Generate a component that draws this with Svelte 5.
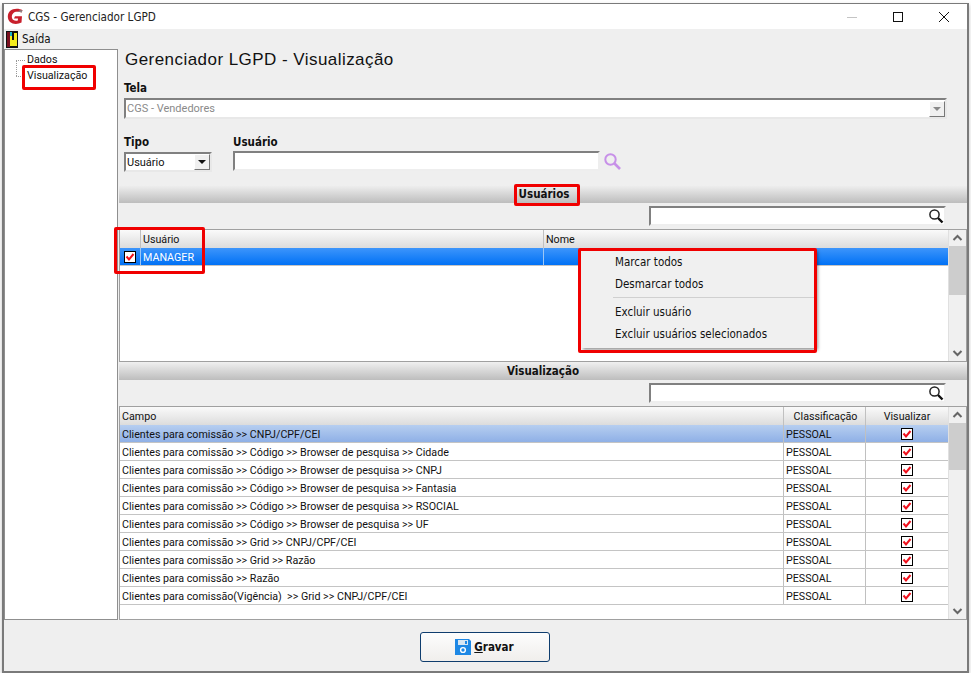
<script>
  const users = [{ name: 'MANAGER' }];
  const menu = ['Marcar todos', 'Desmarcar todos', null, 'Excluir usuário', 'Excluir usuários selecionados'];
  const fields = [
    'Clientes para comissão >> CNPJ/CPF/CEI',
    'Clientes para comissão >> Código >> Browser de pesquisa >> Cidade',
    'Clientes para comissão >> Código >> Browser de pesquisa >> CNPJ',
    'Clientes para comissão >> Código >> Browser de pesquisa >> Fantasia',
    'Clientes para comissão >> Código >> Browser de pesquisa >> RSOCIAL',
    'Clientes para comissão >> Código >> Browser de pesquisa >> UF',
    'Clientes para comissão >> Grid >> CNPJ/CPF/CEI',
    'Clientes para comissão >> Grid >> Razão',
    'Clientes para comissão >> Razão',
    'Clientes para comissão(Vigência)  >> Grid >> CNPJ/CPF/CEI'
  ];
</script>

{#snippet check()}
  <svg class="check" width="12" height="12" viewBox="0 0 12 12">
    <rect x="0.5" y="0.5" width="11" height="11" fill="#fff" stroke="#000" />
    <path d="M2.5 5.5 L5 8.5 L9.5 3" fill="none" stroke="#f0101c" stroke-width="2" />
  </svg>
{/snippet}

{#snippet lens()}
  <svg width="16" height="16" viewBox="0 0 16 16">
    <circle cx="6.5" cy="6.5" r="4.6" fill="none" stroke="#222" stroke-width="1.5" />
    <path d="M10 10 L14.5 14.5" stroke="#111" stroke-width="2.4" />
  </svg>
{/snippet}

{#snippet scrollbar(thumb)}
  <div class="scroll">
    <svg width="17" height="16" viewBox="0 0 17 16"><path d="M4.5 10 L8.5 6 L12.5 10" fill="none" stroke="#666" stroke-width="2" /></svg>
    <div class="thumb" style="height: {thumb}px"></div>
    <div class="track"></div>
    <svg width="17" height="16" viewBox="0 0 17 16"><path d="M4.5 6 L8.5 10 L12.5 6" fill="none" stroke="#666" stroke-width="2" /></svg>
  </div>
{/snippet}

<div class="window">
  <div class="titlebar">
    <svg class="logo" width="17" height="17" viewBox="0 0 17 17">
      <path d="M15.5 2.2 C12 0 6 0.2 3 3 C0 6 0.2 11 3 14 C6 16.6 11 16.4 14.5 14.5 L15 8.2 L8 8.2 L7 10.5 L11 10.6 L10.8 12.6 C8 13.2 5.6 12.4 5 10 C4.4 7 6 4.4 9 3.8 C11 3.4 13 3.8 14.6 4.6 Z" fill="#c8202c" />
      <path d="M15.5 2.2 L14.6 4.6 C13 3.8 11.5 3.4 10 3.5 C12 2.4 14 2 15.5 2.2 Z" fill="#8a8a8a" />
    </svg>
    <span class="title">CGS - Gerenciador LGPD</span>
    <div class="controls">
      <svg width="12" height="12" viewBox="0 0 12 12"><path d="M1 6.5 H11" stroke="#c4c4c4" /></svg>
      <svg width="12" height="12" viewBox="0 0 12 12"><rect x="1.5" y="1.5" width="9" height="9" fill="none" stroke="#111" /></svg>
      <svg width="12" height="12" viewBox="0 0 12 12"><path d="M1 1 L11 11 M11 1 L1 11" stroke="#111" /></svg>
    </div>
  </div>

  <div class="menubar">
    <svg width="12" height="17" viewBox="0 0 12 17">
      <rect width="12" height="17" fill="#111" />
      <rect x="1" y="1" width="3" height="15" fill="#7a1020" />
      <path d="M4 2 H11 V15 H4 Z" fill="#f5ec1c" />
      <rect x="4" y="1" width="2" height="4" fill="#18b4c8" />
      <rect x="6" y="2" width="2" height="7" fill="#111" />
    </svg>
    <span>Saída</span>
  </div>

  <div class="body">
    <nav class="tree">
      <div class="node">Dados</div>
      <div class="node">Visualização</div>
      <div class="mark mark-tree"></div>
    </nav>

    <main class="main">
      <h1>Gerenciador LGPD - Visualização</h1>

      <label class="lbl lbl-tela">Tela</label>
      <div class="combo combo-tela">
        <span>CGS - Vendedores</span>
        <span class="drop disabled"><i></i></span>
      </div>

      <div class="filters">
        <div class="tipo">
          <label class="lbl">Tipo</label>
          <div class="combo combo-tipo">
            <span>Usuário</span>
            <span class="drop"><i></i></span>
          </div>
        </div>
        <div class="usuario">
          <label class="lbl">Usuário</label>
          <div class="input-row">
            <div class="field field-user"></div>
            <svg width="19" height="19" viewBox="0 0 19 19">
              <circle cx="7.5" cy="7.5" r="5.2" fill="none" stroke="#c790e8" stroke-width="2" />
              <path d="M11.5 11.5 L17 17" stroke="#c790e8" stroke-width="2.6" />
            </svg>
          </div>
        </div>
      </div>

      <div class="band band-users">Usuários<div class="mark mark-band"></div></div>
      <div class="search-row"><div class="field field-search">{@render lens()}</div></div>

      <div class="grid grid-users">
        <div class="grid-main">
          <div class="row head">
            <div class="cell c-check"></div>
            <div class="cell c-user">Usuário</div>
            <div class="cell c-name">Nome</div>
          </div>
          {#each users as user}
            <div class="row user-row">
              <div class="cell c-check">{@render check()}</div>
              <div class="cell c-user">{user.name}</div>
              <div class="cell c-name"></div>
            </div>
          {/each}
        </div>
        {@render scrollbar(49)}
        <div class="mark mark-grid"></div>
        <div class="ctx">
          {#each menu as item}
            {#if item}
              <div class="ctx-item">{item}</div>
            {:else}
              <div class="ctx-sep"></div>
            {/if}
          {/each}
          <div class="mark mark-ctx"></div>
        </div>
      </div>

      <div class="band band-view">Visualização</div>
      <div class="search-row"><div class="field field-search">{@render lens()}</div></div>

      <div class="grid grid-fields">
        <div class="grid-main">
          <div class="row head">
            <div class="cell c-field">Campo</div>
            <div class="cell c-class">Classificação</div>
            <div class="cell c-vis">Visualizar</div>
          </div>
          {#each fields as field, i}
            <div class="row" class:selected={i === 0}>
              <div class="cell c-field">{field}</div>
              <div class="cell c-class">PESSOAL</div>
              <div class="cell c-vis">{@render check()}</div>
            </div>
          {/each}
        </div>
        {@render scrollbar(47)}
      </div>
    </main>
  </div>

  <footer class="footer">
    <button class="save">
      <svg width="16" height="16" viewBox="0 0 16 16">
        <path d="M0 0 H14 L16 2 V16 H0 Z" fill="#1e88e5" />
        <rect x="3" y="1" width="10" height="5" fill="#d8e6f2" />
        <rect x="10" y="2" width="2" height="3" fill="#1e88e5" />
        <circle cx="8" cy="11" r="2.4" fill="none" stroke="#fff" stroke-width="1.4" />
      </svg>
      <span><u>G</u>ravar</span>
    </button>
  </footer>
</div>

<style>
  :global(body) {
    background: #fff;
  }

  .window {
    box-sizing: border-box;
    width: 967px;
    height: 670px;
    margin: 3px 0 0 2px;
    border: 2px solid #7a7a7a;
    border-top-width: 1px;
    background: #efefef;
    box-shadow: 0 2px 4px rgba(0, 0, 0, 0.25);
    font-family: Roboto, "Liberation Sans", sans-serif;
    font-size: 10.7px;
    color: #111;
    display: flex;
    flex-direction: column;
    overflow: hidden;
  }

  .titlebar {
    height: 25px;
    flex: none;
    background: #fff;
    display: flex;
    align-items: center;
    padding-left: 3px;
    gap: 4px;
  }

  .title {
    font-family: "DejaVu Sans Condensed", sans-serif;
    font-size: 11.6px;
    color: #222;
  }

  .controls {
    margin-left: auto;
    display: flex;
    gap: 34px;
    padding-right: 17px;
  }

  .menubar {
    height: 20px;
    flex: none;
    display: flex;
    align-items: center;
    gap: 4px;
    padding-left: 2px;
    font-family: "DejaVu Sans Condensed", sans-serif;
    font-size: 11.5px;
  }

  .body {
    flex: 1;
    min-height: 0;
    display: flex;
  }

  .tree {
    position: relative;
    box-sizing: border-box;
    width: 114px;
    margin-right: 1px;
    flex: none;
    background: #fff;
    border: 1px solid #8f8f8f;
    padding: 2px 0 0 22px;
    line-height: 16px;
  }

  .node {
    position: relative;
  }

  .node::before {
    content: "";
    position: absolute;
    left: -11px;
    top: 8px;
    width: 9px;
    border-top: 1px dotted #999;
  }

  .node:first-child::after {
    content: "";
    position: absolute;
    left: -11px;
    top: 8px;
    height: 16px;
    border-left: 1px dotted #999;
  }

  .main {
    flex: 1;
    min-width: 0;
  }

  h1 {
    margin: 0;
    padding: 1px 0 0 6px;
    height: 27px;
    box-sizing: border-box;
    font-family: "Liberation Sans", sans-serif;
    font-weight: 400;
    font-size: 17px;
    letter-spacing: 0.45px;
    line-height: 20px;
    color: #111;
  }

  .lbl {
    display: block;
    font-family: "DejaVu Sans Condensed", sans-serif;
    font-weight: 700;
    font-size: 11.5px;
    line-height: 14px;
  }

  .lbl-tela {
    margin: 5px 0 3px 5px;
  }

  .combo {
    box-sizing: border-box;
    display: flex;
    align-items: center;
    background: #fff;
    border: 2px solid #808080;
    border-right-color: #e8e8e8;
    border-bottom-color: #e8e8e8;
    padding-left: 1px;
    font-size: 11px;
  }

  .combo-tela {
    width: 823px;
    height: 21px;
    margin-left: 5px;
    color: #8a8a8a;
  }

  .combo-tipo {
    width: 88px;
    height: 20px;
  }

  .drop {
    margin-left: auto;
    width: 16px;
    height: 16px;
    box-sizing: border-box;
    background: #f0f0f0;
    border: 1px solid;
    border-color: #fff #777 #777 #fff;
    display: flex;
    align-items: center;
    justify-content: center;
  }

  .drop i {
    width: 0;
    height: 0;
    border: 4px solid transparent;
    border-top: 4px solid #111;
    border-bottom: 0;
  }

  .drop.disabled i {
    border-top-color: #888;
  }

  .filters {
    display: flex;
    margin: 16px 0 0 5px;
    gap: 21px;
    height: 37px;
  }

  .tipo .lbl,
  .usuario .lbl {
    margin-bottom: 3px;
  }

  .input-row {
    display: flex;
    align-items: center;
    gap: 3px;
    margin-top: -1px;
  }

  .field {
    box-sizing: border-box;
    background: #fff;
    border: 2px solid #808080;
    border-right-color: #eee;
    border-bottom-color: #eee;
  }

  .field-user {
    width: 367px;
    height: 20px;
  }

  .band {
    position: relative;
    height: 18px;
    background: linear-gradient(#f0f0f0, #bdbdbd);
    text-align: center;
    font-family: "DejaVu Sans Condensed", sans-serif;
    font-weight: 700;
    font-size: 11.5px;
    line-height: 18px;
  }

  .band-users {
    margin-top: 13px;
    padding-left: 2px;
  }

  .search-row {
    display: flex;
    justify-content: flex-end;
    padding: 3px 21px 0 0;
    height: 23px;
    box-sizing: border-box;
  }

  .field-search {
    width: 297px;
    height: 20px;
    display: flex;
    justify-content: flex-end;
    align-items: center;
  }

  .grid {
    position: relative;
    display: flex;
    background: #fff;
    border: 1px solid #a0a0a0;
    margin-top: 3px;
  }

  .grid-users {
    height: 131px;
  }

  .grid-fields {
    height: 212px;
  }

  .grid-main {
    width: 828px;
    flex: none;
  }

  .row {
    display: flex;
    height: 18px;
    border-bottom: 1px solid #c4c4c4;
    box-sizing: border-box;
    line-height: 19px;
    white-space: pre;
  }

  .head {
    background: linear-gradient(#fafafa, #dcdcdc);
    border-bottom: 0;
  }

  .cell {
    box-sizing: border-box;
    border-right: 1px solid #c0c0c0;
    padding-left: 2px;
    overflow: hidden;
  }

  .c-check {
    width: 21px;
    display: flex;
    align-items: center;
    justify-content: center;
    padding: 0;
  }

  .c-user {
    width: 403px;
  }

  .c-name {
    flex: 1;
    border-right: 0;
  }

  .c-field {
    width: 664px;
  }

  .c-class {
    width: 82px;
  }

  .c-vis {
    flex: 1;
    border-right: 0;
    padding: 0;
    display: flex;
    align-items: center;
    justify-content: center;
  }

  .head .c-class {
    text-align: center;
  }

  .user-row {
    background: linear-gradient(#3d95fb, #0071f5);
    color: #fff;
  }

  .user-row .cell {
    border-right-color: #9cc6f5;
  }

  .selected {
    background: linear-gradient(#b6cef0, #8fb0e6);
  }

  .scroll {
    flex: 1;
    background: #f0f0f0;
    display: flex;
    flex-direction: column;
    border-left: 1px solid #e0e0e0;
  }

  .thumb {
    flex: none;
    background: #cdcdcd;
  }

  .track {
    flex: 1;
  }

  .ctx {
    position: absolute;
    left: 461px;
    top: 19px;
    width: 235px;
    height: 99px;
    box-sizing: border-box;
    padding: 2px 2px 0;
    background: #f0f0f0;
    box-shadow: 2px 2px 3px rgba(0, 0, 0, 0.4);
    font-family: "DejaVu Sans Condensed", sans-serif;
    font-size: 11.5px;
    z-index: 2;
  }

  .ctx-item {
    height: 22px;
    line-height: 22px;
    padding-left: 32px;
  }

  .ctx-sep {
    height: 1px;
    margin: 2px 0 3px 30px;
    background: #d0d0d0;
  }

  .mark {
    position: absolute;
    box-sizing: border-box;
    border: 3px solid #f00000;
    border-radius: 2px;
    pointer-events: none;
    z-index: 3;
  }

  .mark-tree {
    left: 17px;
    top: 15px;
    width: 74px;
    height: 25px;
  }

  .mark-band {
    left: 395px;
    top: -1px;
    width: 66px;
    height: 22px;
  }

  .mark-grid {
    left: -6px;
    top: -3px;
    width: 91px;
    height: 47px;
  }

  .mark-ctx {
    left: -3px;
    top: -1px;
    width: 239px;
    height: 105px;
  }

  .footer {
    flex: none;
    height: 51px;
    display: flex;
    align-items: center;
    justify-content: center;
    box-sizing: border-box;
    padding: 2px 2px 0 0;
  }

  .save {
    width: 130px;
    height: 30px;
    display: flex;
    align-items: center;
    justify-content: center;
    gap: 3px;
    padding: 0;
    background: linear-gradient(#fdfdfd, #f0eeec);
    border: 1px solid #0f3d6e;
    border-radius: 3px;
    font-family: "DejaVu Sans Condensed", sans-serif;
    font-weight: 700;
    font-size: 11.5px;
    color: #111;
  }
</style>
